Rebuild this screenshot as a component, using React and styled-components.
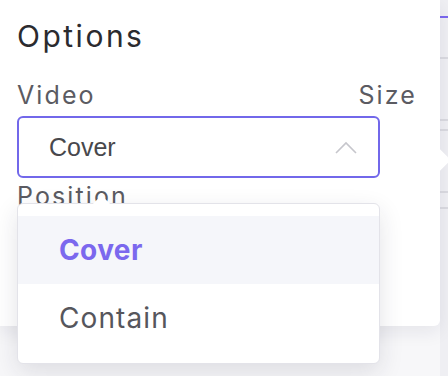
import React from "react";
import styled, { createGlobalStyle } from "styled-components";

const GlobalStyle = createGlobalStyle`
  body {
    margin: 0;
    background: #f7f7f9;
    overflow: hidden;
  }
`;

const Page = styled.div`
  display: flex;
  height: 376px;
  font-family: "Inter", "DejaVu Sans", sans-serif;
`;

const Card = styled.div`
  position: relative;
  width: 440px;
  height: 326px;
  box-sizing: border-box;
  padding: 0 23px 0 17px;
  background: #fff;
  border-radius: 0 0 6px 0;
  box-shadow: 0 6px 18px rgba(30, 30, 60, 0.08);
  z-index: 1;
`;

// arrow pointing at the target on the right
const CardArrow = styled.div`
  position: absolute;
  right: -7px;
  top: 151px;
  width: 18px;
  height: 18px;
  background: #fff;
  transform: rotate(45deg);
`;

const Title = styled.h2`
  margin: 0;
  padding-top: 18px;
  font-size: 30px;
  line-height: 36px;
  font-weight: 400;
  letter-spacing: 2.5px;
  color: #2b2b2f;
`;

const LabelRow = styled.div`
  display: flex;
  justify-content: space-between;
  margin-top: 27px;
  font-size: 25px;
  line-height: 28px;
  letter-spacing: 2.1px;
  color: #5b5b62;
`;

const Select = styled.div`
  display: flex;
  align-items: center;
  justify-content: space-between;
  width: 363px;
  height: 62px;
  box-sizing: border-box;
  margin-top: 7px;
  padding: 0 21px 0 30px;
  border: 2px solid #7268ea;
  border-radius: 6px;
  font-family: "Liberation Sans", Arial, sans-serif;
  font-size: 25px;
  color: #48484c;
`;

const Position = styled.div`
  margin-top: 4px;
  font-size: 25px;
  line-height: 28px;
  letter-spacing: 2.1px;
  color: #5b5b62;
`;

const Menu = styled.div`
  position: absolute;
  left: 17px;
  top: 203px;
  width: 363px;
  height: 161px;
  box-sizing: border-box;
  padding: 12px 0;
  background: #fff;
  border: 1px solid #e3e3e9;
  border-radius: 6px;
  box-shadow: 0 8px 24px rgba(30, 30, 60, 0.12);
  z-index: 2;
`;

const MenuArrow = styled.div`
  position: absolute;
  left: 77px;
  top: -6px;
  width: 13px;
  height: 13px;
  background: #fff;
  transform: rotate(45deg);
`;

const Item = styled.div`
  display: flex;
  align-items: center;
  height: 68px;
  padding-left: 41px;
  font-size: 28px;
  letter-spacing: ${(p) => (p.$active ? "0.4px" : "1.1px")};
  font-weight: ${(p) => (p.$active ? 700 : 400)};
  color: ${(p) => (p.$active ? "#7b68ee" : "#56565c")};
  background: ${(p) => (p.$active ? "#f5f6fa" : "#fff")};
`;

const Side = styled.div`
  flex: 1;
  display: flex;
  flex-direction: column;
  background: #efeff3;
  padding-top: 16px;
`;

const Rule = styled.div`
  height: 2px;
  margin-bottom: ${(p) => p.$gap}px;
  background: ${(p) => (p.$accent ? "#7b68ee" : "#dadae0")};
`;

function Chevron() {
  return (
    <svg width="22" height="13" viewBox="0 0 22 13">
      <path
        d="M1 12 L11 2 L21 12"
        fill="none"
        stroke="#c6c6cc"
        strokeWidth="1.6"
      />
    </svg>
  );
}

export default function App() {
  return (
    <Page>
      <GlobalStyle />
      <Card>
        <Title>Options</Title>
        <LabelRow>
          <span>Video</span>
          <span>Size</span>
        </LabelRow>
        <Select>
          <span>Cover</span>
          <Chevron />
        </Select>
        <Position>Position</Position>
        <CardArrow />
        <Menu>
          <MenuArrow />
          <Item $active>Cover</Item>
          <Item>Contain</Item>
        </Menu>
      </Card>
      <Side>
        <Rule $accent $gap={39} />
        <Rule $gap={60} />
        <Rule $gap={8} />
        <Rule $gap={60} />
        <Rule $gap={14} />
        <Rule />
      </Side>
    </Page>
  );
}
